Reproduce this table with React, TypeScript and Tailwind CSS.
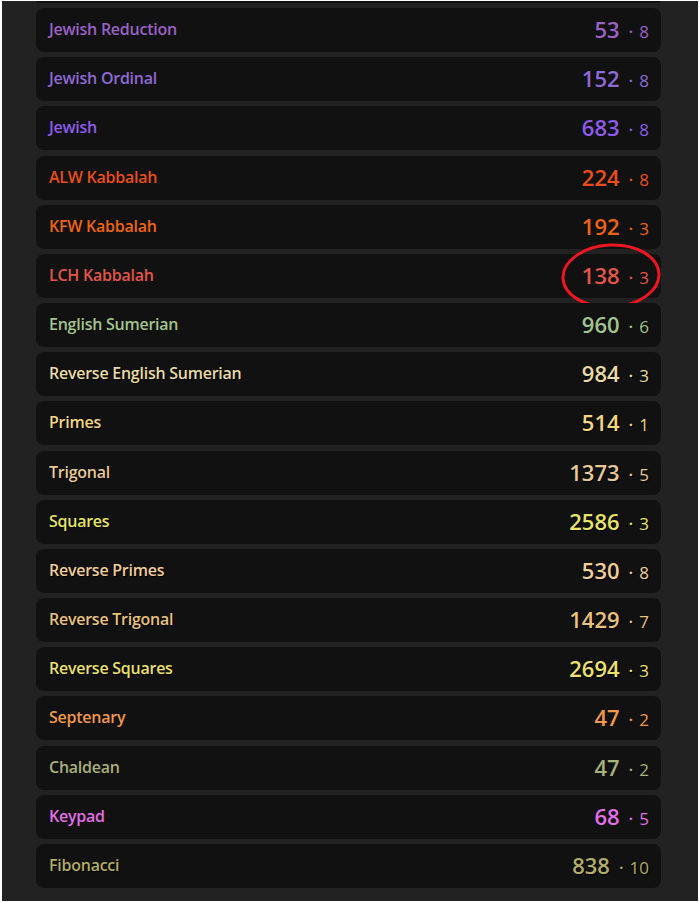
import React from "react";

type Row = { name: string; value: number; digit: number; color: string; shadow?: boolean };

const rows: Row[] = [
  { name: "Jewish Reduction", value: 53, digit: 8, color: "text-[#9a62c6]" },
  { name: "Jewish Ordinal", value: 152, digit: 8, color: "text-[#8e6ad6]" },
  { name: "Jewish", value: 683, digit: 8, color: "text-[#8d5cec]" },
  { name: "ALW Kabbalah", value: 224, digit: 8, color: "text-[#e94e1b]" },
  { name: "KFW Kabbalah", value: 192, digit: 3, color: "text-[#ef6412]" },
  { name: "LCH Kabbalah", value: 138, digit: 3, color: "text-[#e2564a]" },
  { name: "English Sumerian", value: 960, digit: 6, color: "text-[#a2c48e]" },
  { name: "Reverse English Sumerian", value: 984, digit: 3, color: "text-[#e8dba6]", shadow: true },
  { name: "Primes", value: 514, digit: 1, color: "text-[#f3d783]", shadow: true },
  { name: "Trigonal", value: 1373, digit: 5, color: "text-[#e7c99a]", shadow: true },
  { name: "Squares", value: 2586, digit: 3, color: "text-[#e6e46a]", shadow: true },
  { name: "Reverse Primes", value: 530, digit: 8, color: "text-[#f1cd98]", shadow: true },
  { name: "Reverse Trigonal", value: 1429, digit: 7, color: "text-[#e9c37e]", shadow: true },
  { name: "Reverse Squares", value: 2694, digit: 3, color: "text-[#ebe070]", shadow: true },
  { name: "Septenary", value: 47, digit: 2, color: "text-[#f2984e]" },
  { name: "Chaldean", value: 47, digit: 2, color: "text-[#a8b07c]" },
  { name: "Keypad", value: 68, digit: 5, color: "text-[#e26fe6]" },
  { name: "Fibonacci", value: 838, digit: 10, color: "text-[#b3ad66]", shadow: true },
];

export default function App() {
  return (
    <div className="w-[699px] h-[902px] bg-white pl-[2px] pt-[1px] pb-[1px] pr-[1px]" style={{ fontFamily: '"Open Sans", "Noto Sans", sans-serif' }}>
      <div className="h-full w-full bg-[#222222] overflow-hidden pl-[34px]">
        <div className="w-[625px] h-[2px] bg-[#111111] rounded-b-[8px]" />
        <div className="flex flex-col gap-[5.18px] pt-[5px]">
          {rows.map((r) => (
            <div
              key={r.name}
              className={`relative h-[44px] w-[625px] rounded-[8px] bg-[#111111] flex items-center justify-between pl-[13px] pr-[12px] ${r.color}`}
              style={r.shadow ? { textShadow: "1px 1px 1px #000" } : undefined}
            >
              <span className="text-[16px] font-semibold tracking-[-0.25px] -mt-[2px]">{r.name}</span>
              <span className="flex items-baseline -mt-[2px]">
                <span className="text-[22px] font-semibold leading-none">{r.value}</span>
                <span className="text-[17px] font-semibold leading-none ml-[9px] mr-[6px]">·</span>
                <span className="text-[17px] font-medium leading-none">{r.digit}</span>
              </span>
              {r.name === "LCH Kabbalah" && (
                <svg className="absolute left-[524px] top-[-13px] pointer-events-none" width="104" height="70" viewBox="0 0 104 70">
                  <ellipse cx="51" cy="35" rx="48" ry="31" fill="none" stroke="#ee1620" strokeWidth="3" transform="rotate(-3 51 35)" />
                </svg>
              )}
            </div>
          ))}
        </div>
      </div>
    </div>
  );
}
